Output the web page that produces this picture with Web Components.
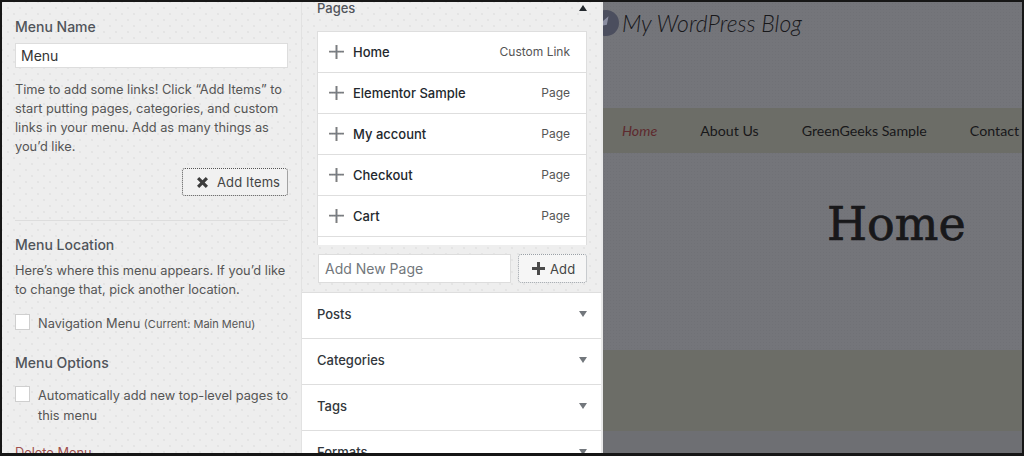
<!DOCTYPE html>
<html>
<head>
<meta charset="utf-8">
<title>Menu editor</title>
<style>
    html, body { margin: 0; height: 100%; overflow: hidden; background: #161616; }
</style>
</head>
<body>
<menu-screen>
    <menu-panel slot="left"></menu-panel>
    <items-panel slot="middle">
        <page-row title-text="Home" kind="Custom Link"></page-row>
        <page-row title-text="Elementor Sample" kind="Page"></page-row>
        <page-row title-text="My account" kind="Page"></page-row>
        <page-row title-text="Checkout" kind="Page"></page-row>
        <page-row title-text="Cart" kind="Page"></page-row>
    </items-panel>
    <site-preview slot="right"></site-preview>
</menu-screen>

<script>
const uiFont = `font-family: Inter, "Liberation Sans", sans-serif;`
const dots = `background-color: #eeeeee;
    background-image: radial-gradient(circle, #e2e2e2 0.6px, transparent 1px), radial-gradient(circle, #e2e2e2 0.6px, transparent 1px);
    background-size: 12px 12px;
    background-position: 0 0, 6px 6px;`

function define(name, html, init) {
    customElements.define(name, class extends HTMLElement {
        constructor() {
            super()
            this.attachShadow({ mode: 'open' })
            const template = document.createElement('template')
            template.innerHTML = html
            this.shadowRoot.appendChild(template.content.cloneNode(true))
        }
        connectedCallback() {
            if (init) init(this, this.shadowRoot)
        }
    })
}

define('menu-screen', `
    <style>
        :host {
            display: grid;
            grid-template-columns: 299px 302px 1fr;
            box-sizing: border-box;
            width: 1024px;
            height: 456px;
            border: solid #161616;
            border-width: 2px 2px 3px 2px;
            overflow: hidden;
            ${uiFont}
        }
        ::slotted(*) { min-width: 0; }
    </style>
    <slot name="left"></slot>
    <slot name="middle"></slot>
    <slot name="right"></slot>
`)

define('wp-button', `
    <style>
        :host {
            display: inline-flex;
            align-items: center;
            box-sizing: border-box;
            border: 1px dotted #555;
            border-radius: 3px;
            color: #444;
            font-size: 13px;
            letter-spacing: 0.1px;
            background: #f1f1f1;
        }
    </style>
    <slot></slot>
`)

define('check-row', `
    <style>
        :host { display: flex; gap: 8px; align-items: flex-start; color: #555; font-size: 12.8px; line-height: 20px; }
        i { flex: none; box-sizing: border-box; width: 15px; height: 16px; background: #fff; border: 1px solid #cfcfcf; }
    </style>
    <i></i><span><slot></slot></span>
`)

define('menu-panel', `
    <style>
        :host {
            display: block;
            box-sizing: border-box;
            height: 451px;
            padding: 16px 12px 0 13px;
            color: #555;
            font-size: 12.8px;
            line-height: 19px;
            overflow: hidden;
            ${dots}
        }
        h3 { margin: 0; font-size: 14px; line-height: 18px; font-weight: 500; color: #50545a; }
        .name {
            box-sizing: border-box;
            height: 25px;
            margin: 7px 1px 12px 0;
            padding: 0 5px;
            background: #fff;
            border: 1px solid #ddd;
            color: #333;
            font-size: 14px;
            line-height: 23px;
        }
        p { margin: 0; }
        .actions { display: flex; justify-content: flex-end; margin: 12px 1px 0 0; }
        wp-button { width: 106px; height: 28px; padding-left: 13px; gap: 8px; }
        hr { border: 0; border-top: 1px solid #ddd; margin: 24px 1px 15px 0; }
        .loc { margin-top: 7px; padding-right: 1px; }
        check-row { margin-top: 15px; }
        small { font-size: 11px; }
        .options { margin: 20px 0 -1px; }
        .delete { margin-top: 17px; color: #a0504d; }
    </style>
    <h3>Menu Name</h3>
    <div class="name">Menu</div>
    <p>Time to add some links! Click “Add Items” to start putting pages, categories, and custom links in your menu. Add as many things as you’d like.</p>
    <div class="actions">
        <wp-button>
            <svg width="13" height="13" viewBox="0 0 13 13"><path d="M1 3.2 3.2 1l3.3 3.3L9.800 1 12 3.200 8.700 6.500 12 9.800 9.800 12 6.500 8.700 3.200 12 1 9.800 4.300 6.500Z" fill="#3c3c3c"/></svg>
            <span>Add Items</span>
        </wp-button>
    </div>
    <hr>
    <h3>Menu Location</h3>
    <p class="loc">Here’s where this menu appears. If you’d like to change that, pick another location.</p>
    <check-row>Navigation Menu <small>(Current: Main Menu)</small></check-row>
    <h3 class="options">Menu Options</h3>
    <check-row>Automatically add new top-level pages to this menu</check-row>
    <div class="delete">Delete Menu</div>
`)

define('page-row', `
    <style>
        :host {
            display: flex;
            align-items: center;
            box-sizing: border-box;
            height: 41px;
            padding: 0 16px 0 11px;
            border-bottom: 1px solid #dedede;
            color: #555;
            font-size: 12px;
        }
        svg { flex: none; margin-right: 9px; }
        b { flex: 1; font-size: 13px; font-weight: 500; color: #23282d; }
        span { padding-bottom: 2px; }
    </style>
    <svg width="15" height="16" viewBox="0 0 15 16">
        <path d="M6.500 1h2v5.800H15v1.600H8.500V15h-2V8.400H0V6.800h6.500Z" fill="#808080"/>
        <path d="M7.500 2v12M1 7.600h13" stroke="#6f7a86" stroke-width=".8" stroke-dasharray="1 1"/>
    </svg>
    <b></b><span></span>
`, (el, root) => {
    root.querySelector('b').textContent = el.getAttribute('title-text')
    root.querySelector('span').textContent = el.getAttribute('kind')
})

define('accordion-row', `
    <style>
        :host {
            display: flex;
            align-items: center;
            justify-content: space-between;
            box-sizing: border-box;
            height: 46px;
            padding: 0 14px 3px 15px;
            background: #fff;
            border-bottom: 1px solid #dedede;
            color: #32373c;
            font-size: 13px;
            font-weight: 500;
        }
        i { width: 0; height: 0; border: 4px solid transparent; border-top: 6px solid #72777c; border-bottom: 0; }
    </style>
    <slot></slot><i></i>
`)

define('items-panel', `
    <style>
        :host {
            display: block;
            box-sizing: border-box;
            height: 451px;
            border-left: 1px solid #e2e2e2;
            border-right: 2px solid #e9e9e9;
            overflow: hidden;
            ${dots}
        }
        .head {
            display: flex;
            justify-content: space-between;
            align-items: center;
            height: 11px;
            padding: 0 14px 0 15px;
            color: #50545a;
            font-size: 13px;
            font-weight: 500;
        }
        .head i { width: 0; height: 0; border: 4px solid transparent; border-bottom: 6px solid #23282d; border-top: 0; }
        .list {
            box-sizing: border-box;
            height: 214px;
            margin: 18px 14px 0 15px;
            background: #fff;
            border: 1px solid #dedede;
            border-bottom: 0;
            overflow: hidden;
        }
        .add {
            display: flex;
            gap: 7px;
            margin: 9px 14px 9px 16px;
            height: 29px;
        }
        .new {
            box-sizing: border-box;
            width: 193px;
            padding: 0 6px;
            background: #fff;
            border: 1px solid #ddd;
            color: #72777c;
            font-size: 14px;
            line-height: 27px;
        }
        wp-button { width: 69px; padding-left: 13px; gap: 5px; border-color: #9aa0a6; background: #f6f6f6; }
    </style>
    <div class="head"><span>Pages</span><i></i></div>
    <div class="list"><slot></slot></div>
    <div class="add">
        <div class="new">Add New Page</div>
        <wp-button>
            <svg width="13" height="13" viewBox="0 0 13 13"><path d="M5 0h3v5h5v3H8v5H5V8H0V5h5Z" fill="#4a4a4a"/></svg>
            <span>Add</span>
        </wp-button>
    </div>
    <accordion-row style="border-top:1px solid #dedede;height:47px">Posts</accordion-row>
    <accordion-row>Categories</accordion-row>
    <accordion-row>Tags</accordion-row>
    <accordion-row>Formats</accordion-row>
`)

define('site-preview', `
    <style>
        :host {
            display: block;
            height: 451px;
            overflow: hidden;
            color: #18181a;
            background-color: #74757a;
            background-image: radial-gradient(circle, #707176 0.6px, transparent 1px);
            background-size: 3px 3px;
        }
        header { display: flex; align-items: center; height: 106px; padding: 0 0 64px; box-sizing: border-box; }
        header svg { flex: none; margin-left: -3px; margin-right: 2px; }
        header span { font: italic 300 23px Lato, "Open Sans", sans-serif; white-space: nowrap; }
        nav {
            display: flex;
            align-items: center;
            gap: 43px;
            height: 45px;
            padding-left: 19px;
            background: #6c6d67;
            font: 400 14.200px Lato, "Open Sans", sans-serif;
            white-space: nowrap;
        }
        nav em { color: #5e2a2e; }
        h1 {
            margin: 0;
            height: 197px;
            box-sizing: border-box;
            padding: 41px 0 0 224px;
            font: 400 46px "DejaVu Serif", serif;
            -webkit-text-stroke: 0.7px #18181a;
            line-height: 60px;
        }
        .band { height: 81px; background: #6c6d67; }
        .foot { height: 30px; background: #6e6f73; }
    </style>
    <header>
        <svg width="20" height="28" viewBox="0 0 20 28">
            <circle cx="6" cy="14" r="13" fill="#4b4e5e"/>
            <path d="M0 16 7 10l-1 5Z" fill="#8a8da0" stroke="#8a8da0" stroke-width="2"/>
        </svg>
        <span>My WordPress Blog</span>
    </header>
    <nav><em>Home</em><span>About Us</span><span>GreenGeeks Sample</span><span>Contact</span></nav>
    <h1>Home</h1>
    <div class="band"></div>
    <div class="foot"></div>
`)
</script>
</body>
</html>
